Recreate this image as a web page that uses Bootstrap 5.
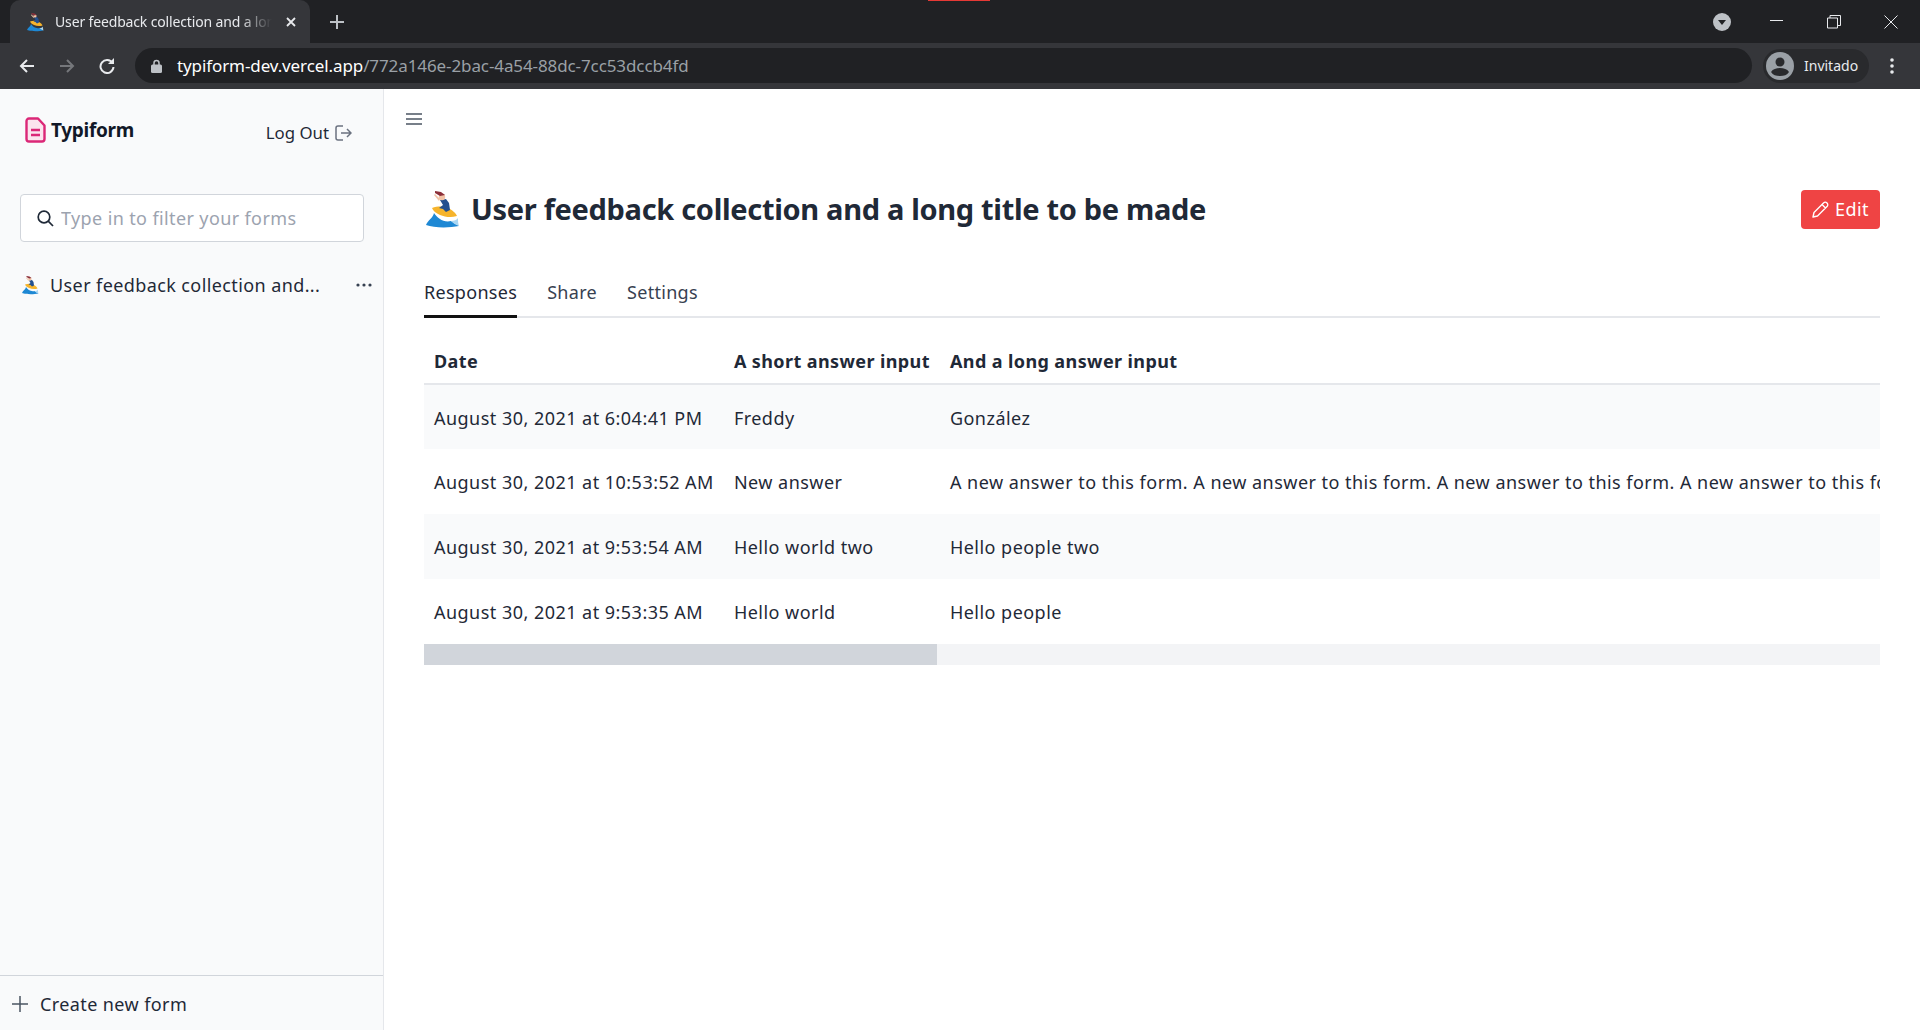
<!DOCTYPE html>
<html lang="en">
<head>
  <meta charset="UTF-8" />
  <meta name="viewport" content="width=device-width, initial-scale=1" />
  <title>Typiform</title>
  <link href="https://cdn.jsdelivr.net/npm/bootstrap@5.3.0/dist/css/bootstrap.min.css" rel="stylesheet" />
  <style>
    html, body { height: 100%; overflow: hidden; }
    body { font-family: "Noto Sans", "Open Sans", sans-serif; font-size: 18px; letter-spacing: .4px; color: #1f2937; background: #fff; }

    /* browser chrome */
    .chrome-tabs { height: 43px; background: #202124; padding-left: 10px; position: relative; flex: none; letter-spacing: 0; }
    .chrome-flash { position: absolute; left: 928px; top: 0; width: 62px; height: 1px; background: #e53935; }
    .chrome-tab { width: 300px; height: 43px; background: #35363a; border-radius: 10px 10px 0 0; padding: 0 13px 0 16px; color: #e8eaed; font-size: 14px; }
    .chrome-tab-title { width: 217px; margin-left: 11px; white-space: nowrap; overflow: hidden; -webkit-mask-image: linear-gradient(90deg, #000 85%, transparent); mask-image: linear-gradient(90deg, #000 85%, transparent); letter-spacing: -.15px; }
    .chrome-new { margin-left: 20px; }
    .chrome-win { margin-left: auto; padding-right: 22px; gap: 43px; }
    .chrome-win svg:first-child { margin-right: -4px; }
    .chrome-bar { height: 46px; background: #35363a; padding: 5px 26px 6px 19px; flex: none; letter-spacing: 0; }
    .chrome-nav { gap: 24px; width: 116px; }
    .chrome-address { width: 1617px; height: 35px; background: #202124; border-radius: 18px; padding-left: 16px; font-size: 17px; letter-spacing: -.1px; color: #9aa0a6; white-space: nowrap; }
    .chrome-host { color: #fff; }
    .chrome-address svg { margin-right: 15px; }
    .chrome-profile { width: 106px; height: 34px; margin-left: 11px; border-radius: 17px; background: #292a2d; padding-left: 3px; color: #e8eaed; font-size: 14px; gap: 10px; }
    .chrome-more { margin-left: auto; }

    /* sidebar */
    .side-panel { width: 384px; flex: none; background: #f9fafb; border-right: 1px solid #e5e7eb; }
    .side-head { height: 105px; padding: 27px 31px 0 25px; }
    .brand-name { font-size: 19px; font-weight: 700; color: #111827; margin-left: 5px; letter-spacing: -.3px; }
    .logout-link { color: #1f2937; text-decoration: none; font-size: 16.8px; letter-spacing: 0; gap: 6px; margin-top: 4px; }
    .filter-box { margin: 0 19px 0 20px; height: 48px; background: #fff; border: 1px solid #d1d5db; border-radius: 4px; padding: 0 16px; gap: 7px; }
    .filter-box input { border: 0; outline: 0; width: 100%; background: transparent; font-size: 18px; letter-spacing: .38px; padding: 0; color: #1f2937; }
    .filter-box input::placeholder { color: #9ca3af; opacity: 1; }
    .form-entry { margin-top: 28px; padding: 0 11px 0 21px; height: 30px; }
    .form-entry-name { margin-left: 11px; font-size: 18px; white-space: nowrap; }
    .side-foot { height: 55px; border-top: 1px solid #d1d5db; padding: 2px 0 0 12px; gap: 12px; color: #1f2937; }

    /* main */
    .main-pane { min-width: 0; padding: 0 40px; }
    .menu-toggle { padding: 0; border: 0; background: none; margin: 22px 0 0 -18px; height: 16px; line-height: 0; align-self: flex-start; }
    .form-title-row { margin-top: 52px; height: 60px; }
    .form-title { font-size: 29px; font-weight: 700; margin: 0 0 0 11px; color: #1f2937; letter-spacing: -.32px; }
    .edit-btn { background: #ef4444; border: 0; color: #fff; font-size: 18px; letter-spacing: .4px; height: 39px; width: 79px; border-radius: 4px; padding: 0; gap: 6px; }
    .edit-btn:hover { background: #dc2626; color: #fff; }
    .tab-row { margin-top: 38px; border-bottom: 2px solid #e5e7eb; gap: 30px; height: 41px; }
    .tab-row .nav-link { padding: 0; height: 41px; color: #374151; font-size: 18px; line-height: 30px; letter-spacing: .3px; }
    .tab-row .nav-link.active { color: #1f2937; border-bottom: 3px solid #111; }
    .answers-wrap { margin-top: 21px; overflow: hidden; }
    .answers-table { width: 4132px; margin: 0; --bs-table-striped-bg: #f9fafb; --bs-table-color: #1f2937; --bs-table-striped-color: #1f2937; font-size: 18px; }
    .answers-table th, .answers-table td { padding: 0 10px; white-space: nowrap; vertical-align: middle; }
    .answers-table th { height: 45px; font-weight: 700; color: #1f2937; }
    .answers-table thead tr { border-bottom: 2px solid #e5e7eb; }
    .answers-table td { height: 65px; padding-top: 2px; letter-spacing: .47px; }
    .col-fit { width: 1%; }
    .answers-scroll { height: 21px; background: #f3f4f6; flex: none; }
    .answers-thumb { width: 513px; height: 100%; background: #d1d5db; }
  </style>
</head>
<body class="d-flex flex-column">
  <svg width="0" height="0" class="position-absolute">
    <symbol id="surfer" viewBox="0 0 36 38">
      <path d="M2 35C4 30 9 28 10 23c3 5 10 10 17 8 3 2 6 4 8 5-10 2-25 2-33-1z" fill="#1e88d4"/>
      <path d="M27 31c3 0 6-1 7-3 0 3 0 5 1 8-3-1-6-3-8-5z" fill="#a9d6f2"/>
      <path d="M8 18c6-2 13-2 18 1 3 2 6 4 7 7-6 2-12 1-17-1-4-2-7-4-8-7z" fill="#f6b42c"/>
      <path d="M16 10l6-1 3 4 1 7-4 2-3-3-4-1 4-3z" fill="#23508f"/>
      <circle cx="18" cy="7" r="3.200" fill="#f2c4a8"/>
      <path d="M11 1l6 1 4 3-5 1-5-3z" fill="#8c2f39"/>
      <path d="M11 4l5 5-1 2-5-6z" fill="#f2c4a8"/>
    </symbol>
  </svg>

  <div class="chrome-tabs d-flex">
    <span class="chrome-flash"></span>
    <div class="chrome-tab d-flex align-items-center">
      <svg width="18" height="20"><use href="#surfer"/></svg>
      <span class="chrome-tab-title">User feedback collection and a long title</span>
      <svg class="ms-auto" width="12" height="12" viewBox="0 0 12 12"><path d="M2 2l8 8M10 2l-8 8" stroke="#e8eaed" stroke-width="1.8"/></svg>
    </div>
    <div class="chrome-new d-flex align-items-center">
      <svg width="14" height="14" viewBox="0 0 14 14"><path d="M7 0v14M0 7h14" stroke="#bdc1c6" stroke-width="2"/></svg>
    </div>
    <div class="chrome-win d-flex align-items-center">
      <svg width="18" height="18" viewBox="0 0 18 18"><circle cx="9" cy="9" r="9" fill="#bdc1c6"/><path d="M5 7h8l-4 5z" fill="#202124"/></svg>
      <svg width="14" height="14" viewBox="0 0 14 14"><path d="M0 5.500h13" stroke="#e8eaed"/></svg>
      <svg width="14" height="14" viewBox="0 0 14 14"><path d="M.5 3h10v10H.5zM3 3V.5h10.500v10H10.500" fill="none" stroke="#e8eaed"/></svg>
      <svg width="14" height="14" viewBox="0 0 14 14"><path d="M.5.500l13 13M13.500.500l-13 13" stroke="#e8eaed"/></svg>
    </div>
  </div>

  <div class="chrome-bar d-flex align-items-center">
    <div class="chrome-nav d-flex align-items-center">
      <svg width="16" height="16" viewBox="0 0 16 16"><path d="M15 8H2M8 2L2 8l6 6" fill="none" stroke="#e8eaed" stroke-width="2"/></svg>
      <svg width="16" height="16" viewBox="0 0 16 16"><path d="M1 8h13M8 2l6 6-6 6" fill="none" stroke="#75777b" stroke-width="2"/></svg>
      <svg width="16" height="16" viewBox="0 0 16 16"><path d="M13.500 5A6.500 6.500 0 1 0 14.500 9" fill="none" stroke="#e8eaed" stroke-width="2"/><path d="M15 0v6H9z" fill="#e8eaed"/></svg>
    </div>
    <div class="chrome-address d-flex align-items-center">
      <svg width="11" height="14" viewBox="0 0 11 14"><path d="M3 6V4a2.500 2.500 0 0 1 5 0v2" fill="none" stroke="#bdc1c6" stroke-width="1.500"/><rect y="5.500" width="11" height="8.500" rx="1.500" fill="#bdc1c6"/></svg>
      <span><span class="chrome-host">typiform-dev.vercel.app</span>/772a146e-2bac-4a54-88dc-7cc53dccb4fd</span>
    </div>
    <div class="chrome-profile d-flex align-items-center">
      <svg width="28" height="28" viewBox="0 0 28 28"><circle cx="14" cy="14" r="14" fill="#9aa0a6"/><circle cx="14" cy="10" r="4.500" fill="#292a2d"/><path d="M5 20c2-3 5-4 9-4s7 1 9 4c-2 3-5 4-9 4s-7-1-9-4z" fill="#292a2d"/></svg>
      <span>Invitado</span>
    </div>
    <svg class="chrome-more" width="4" height="16" viewBox="0 0 4 16"><circle cx="2" cy="2" r="1.800" fill="#e8eaed"/><circle cx="2" cy="8" r="1.800" fill="#e8eaed"/><circle cx="2" cy="14" r="1.800" fill="#e8eaed"/></svg>
  </div>

  <div class="d-flex flex-grow-1" style="min-height:0">
    <aside class="side-panel d-flex flex-column">
      <div class="side-head d-flex justify-content-between align-items-start">
        <div class="d-flex align-items-center">
          <svg width="21" height="26" viewBox="0 0 21 26"><path d="M4 1.500h9l6.500 7V22a2.500 2.500 0 0 1-2.500 2.500H4A2.500 2.500 0 0 1 1.500 22V4A2.500 2.500 0 0 1 4 1.500z" fill="#fbe4ee" stroke="#db2777" stroke-width="2.400" stroke-linejoin="round"/><path d="M6 13h9M6 18h9" stroke="#db2777" stroke-width="2.400"/></svg>
          <span class="brand-name">Typiform</span>
        </div>
        <a href="#" class="logout-link d-flex align-items-center">Log Out
          <svg width="17" height="16" viewBox="0 0 17 16"><path d="M8 1H3a2 2 0 0 0-2 2v10a2 2 0 0 0 2 2h5M6 8h10M12 4l4 4-4 4" fill="none" stroke="#6b7280" stroke-width="1.500"/></svg>
        </a>
      </div>
      <div class="filter-box d-flex align-items-center">
        <svg class="flex-shrink-0" width="17" height="17" viewBox="0 0 17 17"><circle cx="7" cy="7" r="5.800" fill="none" stroke="#1f2937" stroke-width="1.700"/><path d="M11.200 11.200L16 16" stroke="#1f2937" stroke-width="1.700"/></svg>
        <input type="text" placeholder="Type in to filter your forms" />
      </div>
      <div class="form-entry d-flex align-items-center">
        <svg width="18" height="20"><use href="#surfer"/></svg>
        <span class="form-entry-name">User feedback collection and...</span>
        <svg class="ms-auto" width="16" height="4" viewBox="0 0 16 4"><circle cx="2" cy="2" r="1.600" fill="#374151"/><circle cx="8" cy="2" r="1.600" fill="#374151"/><circle cx="14" cy="2" r="1.600" fill="#374151"/></svg>
      </div>
      <div class="side-foot d-flex align-items-center mt-auto">
        <svg width="16" height="16" viewBox="0 0 16 16"><path d="M8 0v16M0 8h16" stroke="#4b5563" stroke-width="1.500"/></svg>
        <span>Create new form</span>
      </div>
    </aside>

    <main class="main-pane flex-grow-1 d-flex flex-column">
      <button class="menu-toggle" aria-label="Menu">
        <svg width="16" height="12" viewBox="0 0 16 12"><path d="M0 1h16M0 6h16M0 11h16" stroke="#4b5563" stroke-width="1.500"/></svg>
      </button>
      <div class="form-title-row d-flex align-items-center">
        <svg width="36" height="38"><use href="#surfer"/></svg>
        <h1 class="form-title">User feedback collection and a long title to be made</h1>
        <button class="btn edit-btn ms-auto d-flex align-items-center justify-content-center">
          <svg width="17" height="17" viewBox="0 0 17 17"><path d="M1 16l1-4.500L11.500 2a2.100 2.100 0 0 1 3.500 3.500L5.500 15zM10 3.500l3.500 3.500" fill="none" stroke="#fff" stroke-width="1.400" stroke-linejoin="round"/></svg>
          Edit
        </button>
      </div>
      <ul class="nav tab-row">
        <li class="nav-item"><a class="nav-link active" href="#">Responses</a></li>
        <li class="nav-item"><a class="nav-link" href="#">Share</a></li>
        <li class="nav-item"><a class="nav-link" href="#">Settings</a></li>
      </ul>
      <div class="answers-wrap">
        <table class="table table-borderless table-striped answers-table">
          <thead>
            <tr><th class="col-fit">Date</th><th class="col-fit">A short answer input</th><th>And a long answer input</th></tr>
          </thead>
          <tbody>
            <tr><td>August 30, 2021 at 6:04:41 PM</td><td>Freddy</td><td>González</td></tr>
            <tr><td>August 30, 2021 at 10:53:52 AM</td><td>New answer</td><td>A new answer to this form. A new answer to this form. A new answer to this form. A new answer to this form. A new answer to this form. A new answer to this form. A new answer to this form.</td></tr>
            <tr><td>August 30, 2021 at 9:53:54 AM</td><td>Hello world two</td><td>Hello people two</td></tr>
            <tr><td>August 30, 2021 at 9:53:35 AM</td><td>Hello world</td><td>Hello people</td></tr>
          </tbody>
        </table>
      </div>
      <div class="answers-scroll"><div class="answers-thumb"></div></div>
    </main>
  </div>

  <script src="https://cdn.jsdelivr.net/npm/bootstrap@5.3.0/dist/js/bootstrap.bundle.min.js"></script>
</body>
</html>
